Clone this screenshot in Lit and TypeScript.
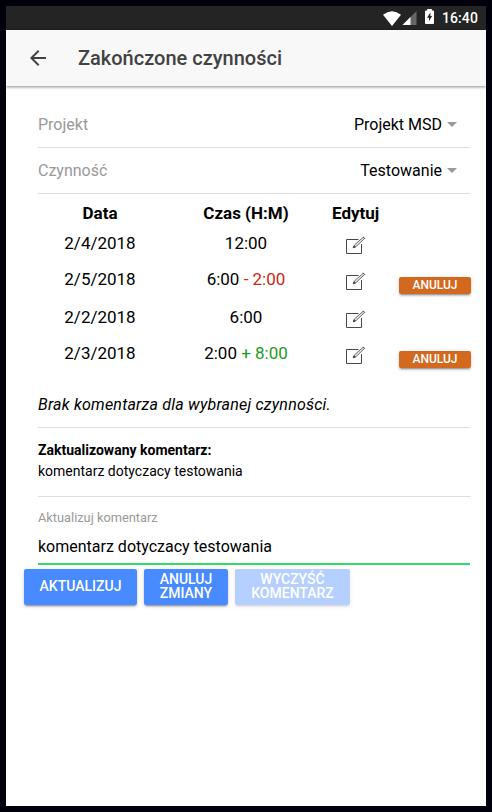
import { LitElement, html, css, svg } from "lit";
import { customElement, property } from "lit/decorators.js";

interface Entry {
  date: string;
  time: string;
  change?: string;
  kind?: "minus" | "plus";
}

const entries: Entry[] = [
  { date: "2/4/2018", time: "12:00" },
  { date: "2/5/2018", time: "6:00", change: "- 2:00", kind: "minus" },
  { date: "2/2/2018", time: "6:00" },
  { date: "2/3/2018", time: "2:00", change: "+ 8:00", kind: "plus" },
];

const editShape = svg`
  <path d="M12.5 3.5H.5v14h15V8" fill="none" stroke="#484848" stroke-width="1"/>
  <path d="M7.6 11.4l.9-2.5L17.2 1.2l1.3 1.3-8.4 8z" fill="#e4e4e4" stroke="#5c5c5c" stroke-width=".9"/>
  <path d="M7.2 11.8l.8-2 1.3 1.2zM17.1.9l1.7 1.7" fill="#484848" stroke="#484848" stroke-width="1"/>`;

@customElement("status-bar")
export class StatusBar extends LitElement {
  static styles = css`
    :host { display: flex; height: 24px; background: #242424; color: #fff; align-items: center;
      justify-content: flex-end; padding-right: 8px; box-sizing: border-box; }
    svg { display: block; }
    .wifi { margin-right: 1px; }
    .battery { margin-left: 8px; margin-top: -3px; }
    .clock { font-size: 14px; font-weight: 500; line-height: 24px; margin-left: 8px; letter-spacing: .1px; }
  `;
  render() {
    return html`
      <svg class="wifi" width="18" height="15" viewBox="0 0 18 15"><path d="M0 3.8Q9-3.4 18 3.8L9 15z" fill="#fff"/></svg>
      <svg class="signal" width="15" height="14" viewBox="0 0 15 14">
        <path d="M14.5 0v14H.5z" fill="#666"/><path d="M8.5 6v8H.5z" fill="#fff"/>
      </svg>
      <svg class="battery" width="9" height="15" viewBox="0 0 9 15">
        <path d="M2.2 0h4.6v1.4H8q1 0 1 1V14q0 1-1 1H1q-1 0-1-1V2.4q0-1 1-1h1.2z" fill="#fff"/>
        <path d="M5.4 3.6L2 8.8h2v3.5L7.1 7H5.4z" fill="#242424"/>
      </svg>
      <span class="clock">16:40</span>`;
  }
}

@customElement("select-row")
export class SelectRow extends LitElement {
  @property() label = "";
  @property() value = "";
  static styles = css`
    :host { display: flex; height: 46px; box-sizing: border-box; border-bottom: 1px solid #dedede;
      align-items: center; font-size: 16px; padding-right: 13px; }
    .label { color: #999; flex: 1; }
    .arrow { margin-left: 5px; border: 5px solid transparent; border-top-color: #999; border-bottom: 0; }
  `;
  render() {
    return html`<span class="label">${this.label}</span><span>${this.value}</span><span class="arrow"></span>`;
  }
}

@customElement("app-root")
export class AppRoot extends LitElement {
  static styles = css`
    :host { display: block; box-sizing: border-box; width: 492px; height: 812px; padding: 6px;
      background: #00000c; font-family: Roboto, "Noto Sans", sans-serif; color: #000; }
    .screen { height: 800px; background: #fff; overflow: hidden; }
    .toolbar { display: flex; align-items: center; height: 56px; background: #f8f8f8; color: #424242;
      box-shadow: 0 1px 3px rgba(0, 0, 0, .45); }
    .back { display: block; margin-left: 24px; }
    .title { margin: 0 0 0 32px; font-size: 20px; font-weight: 500; }
    .content { padding: 16px 16px 0 32px; }
    .grid { display: grid; grid-template-columns: 124px 168px 51px 72px; font-size: 17px; text-align: center; }
    .head { font-weight: 700; line-height: 25px; padding-top: 7px; height: 24px; }
    .head.last { grid-column: span 2; text-align: left; padding-left: 2px; }
    .row { display: contents; }
    .cell { line-height: 36px; height: 36px; }
    .row.changed .cell { height: 38px; }
    .cell.edit { display: flex; justify-content: center; box-sizing: border-box; padding: 11px 0 0 1px; }
    .minus { color: #cb2912; }
    .plus { color: #1c9c21; }
    button { display: block; border: 0; margin: 0; font-family: inherit; font-weight: 500; color: #fff;
      border-radius: 2px; text-transform: uppercase;
      box-shadow: 0 2px 2px 0 rgba(0, 0, 0, .14), 0 3px 1px -2px rgba(0, 0, 0, .2), 0 1px 5px 0 rgba(0, 0, 0, .12); }
    .undo { width: 72px; height: 17px; margin: 16px 0 0 18px; padding: 0; background: #d2691e; font-size: 12px; line-height: 17px; }
    .note { height: 55px; box-sizing: border-box; padding-top: 9px; border-bottom: 1px solid #dedede;
      font-size: 16px; font-style: italic; line-height: 45px; letter-spacing: .215px; }
    .updated { height: 69px; box-sizing: border-box; padding-top: 12px; border-bottom: 1px solid #dedede;
      font-size: 14px; line-height: 21px; }
    .field { height: 68px; box-sizing: border-box; border-bottom: 2px solid #32db64; }
    .field-label { font-size: 12.8px; line-height: 20px; color: #999; padding-top: 11px; }
    .field-value { font-size: 16px; line-height: 20px; padding-top: 9px; }
    .actions { display: flex; gap: 7px; margin: 4px 0 0 -14px; }
    .action { height: 36px; padding: 0 0 2px; background: #488aff; font-size: 14px; line-height: 14px; }
    .update { width: 113px; }
    .cancel { width: 84px; }
    .clear { width: 115px; opacity: .4; }
  `;

  render() {
    return html`
      <div class="screen">
        <status-bar></status-bar>
        <header class="toolbar">
          <svg class="back" width="16" height="16" viewBox="4 4 16 16">
            <path d="M20 11H7.83l5.59-5.59L12 4l-8 8 8 8 1.41-1.41L7.83 13H20z" fill="#424242"/>
          </svg>
          <h1 class="title">Zakończone czynności</h1>
        </header>
        <main class="content">
          <select-row label="Projekt" value="Projekt MSD"></select-row>
          <select-row label="Czynność" value="Testowanie"></select-row>
          <div class="grid">
            <div class="head">Data</div>
            <div class="head">Czas (H:M)</div>
            <div class="head last">Edytuj</div>
            ${entries.map((e) => html`
              <div class="row ${e.change ? "changed" : ""}">
                <div class="cell">${e.date}</div>
                <div class="cell">${e.time}${e.change ? html` <span class=${e.kind!}>${e.change}</span>` : ""}</div>
                <div class="cell edit"><svg width="20" height="18" viewBox="0 0 20 18">${editShape}</svg></div>
                <div class="cell">${e.change ? html`<button class="undo">Anuluj</button>` : ""}</div>
              </div>`)}
          </div>
          <div class="note">Brak komentarza dla wybranej czynności.</div>
          <div class="updated"><b>Zaktualizowany komentarz:</b><br />komentarz dotyczacy testowania</div>
          <div class="field">
            <div class="field-label">Aktualizuj komentarz</div>
            <div class="field-value">komentarz dotyczacy testowania</div>
          </div>
          <div class="actions">
            <button class="action update">Aktualizuj</button>
            <button class="action cancel">Anuluj<br />zmiany</button>
            <button class="action clear" disabled>Wyczyść<br />komentarz</button>
          </div>
        </main>
      </div>`;
  }
}
